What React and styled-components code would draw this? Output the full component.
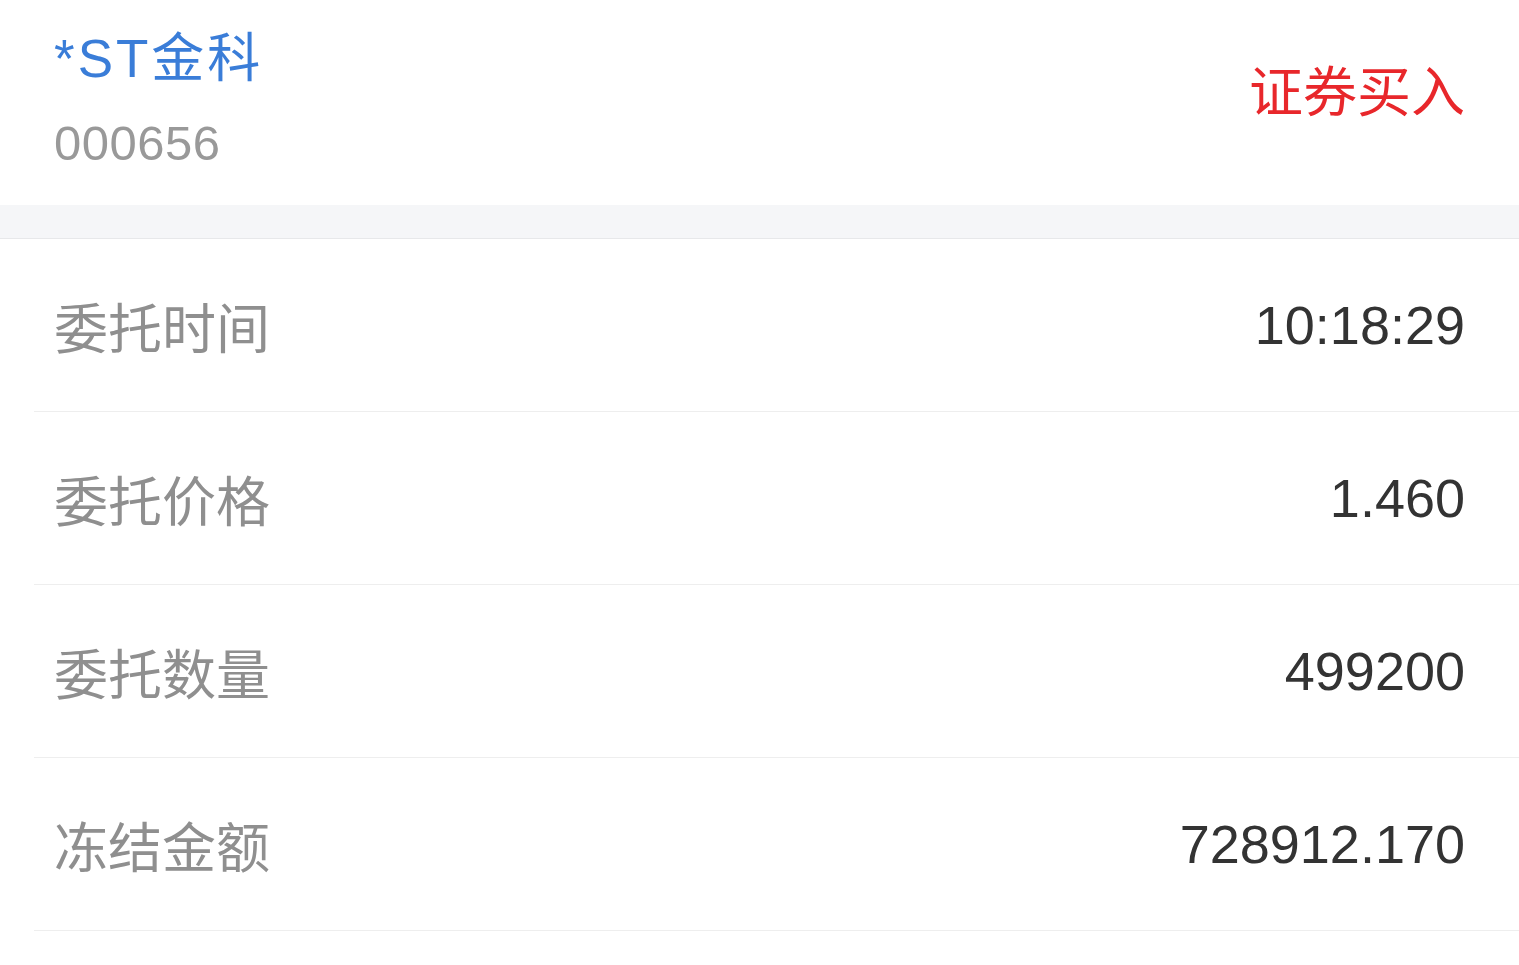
import React from "react";
import styled, { createGlobalStyle } from "styled-components";

const Global = createGlobalStyle`
  html, body { margin: 0; padding: 0; background: #ffffff; }
  body { font-family: "Liberation Sans", "Noto Sans CJK SC", sans-serif; }
`;

const Page = styled.div`
  width: 1519px;
  min-height: 965px;
  background: #ffffff;
  overflow: hidden;
`;

const Header = styled.header`
  display: flex;
  justify-content: space-between;
  align-items: flex-start;
  height: 205px;
  box-sizing: border-box;
  padding: 24px 54px 0 54px;
`;

const StockInfo = styled.div`
  display: flex;
  flex-direction: column;
  gap: 14px;
`;

const StockName = styled.div`
  font-size: 53px;
  line-height: 70px;
  letter-spacing: 3px;
  color: #3a7dd8;
`;

const StockCode = styled.div`
  font-size: 49px;
  line-height: 70px;
  letter-spacing: 0.5px;
  color: #999999;
`;

const TradeType = styled.div`
  margin-top: 34px;
  font-size: 54px;
  line-height: 70px;
  color: #e8272b;
`;

const Band = styled.div`
  height: 33px;
  background: #f5f6f8;
  border-bottom: 1px solid #e7e8ea;
`;

const List = styled.div`
  display: flex;
  flex-direction: column;
`;

const Row = styled.div`
  display: flex;
  justify-content: space-between;
  align-items: center;
  height: 173px;
  box-sizing: border-box;
  margin-left: 34px;
  padding: 0 54px 0 20px;
  border-bottom: 1px solid #eeeeee;
`;

const Label = styled.span`
  font-size: 54px;
  color: #8f8f8f;
`;

const Value = styled.span`
  font-size: 54px;
  color: #333333;
`;

const rows = [
  ["委托时间", "10:18:29"],
  ["委托价格", "1.460"],
  ["委托数量", "499200"],
  ["冻结金额", "728912.170"],
];

export default function App() {
  return (
    <Page>
      <Global />
      <Header>
        <StockInfo>
          <StockName>*ST金科</StockName>
          <StockCode>000656</StockCode>
        </StockInfo>
        <TradeType>证券买入</TradeType>
      </Header>
      <Band />
      <List>
        {rows.map(([l, v]) => (
          <Row key={l}>
            <Label>{l}</Label>
            <Value>{v}</Value>
          </Row>
        ))}
      </List>
    </Page>
  );
}
